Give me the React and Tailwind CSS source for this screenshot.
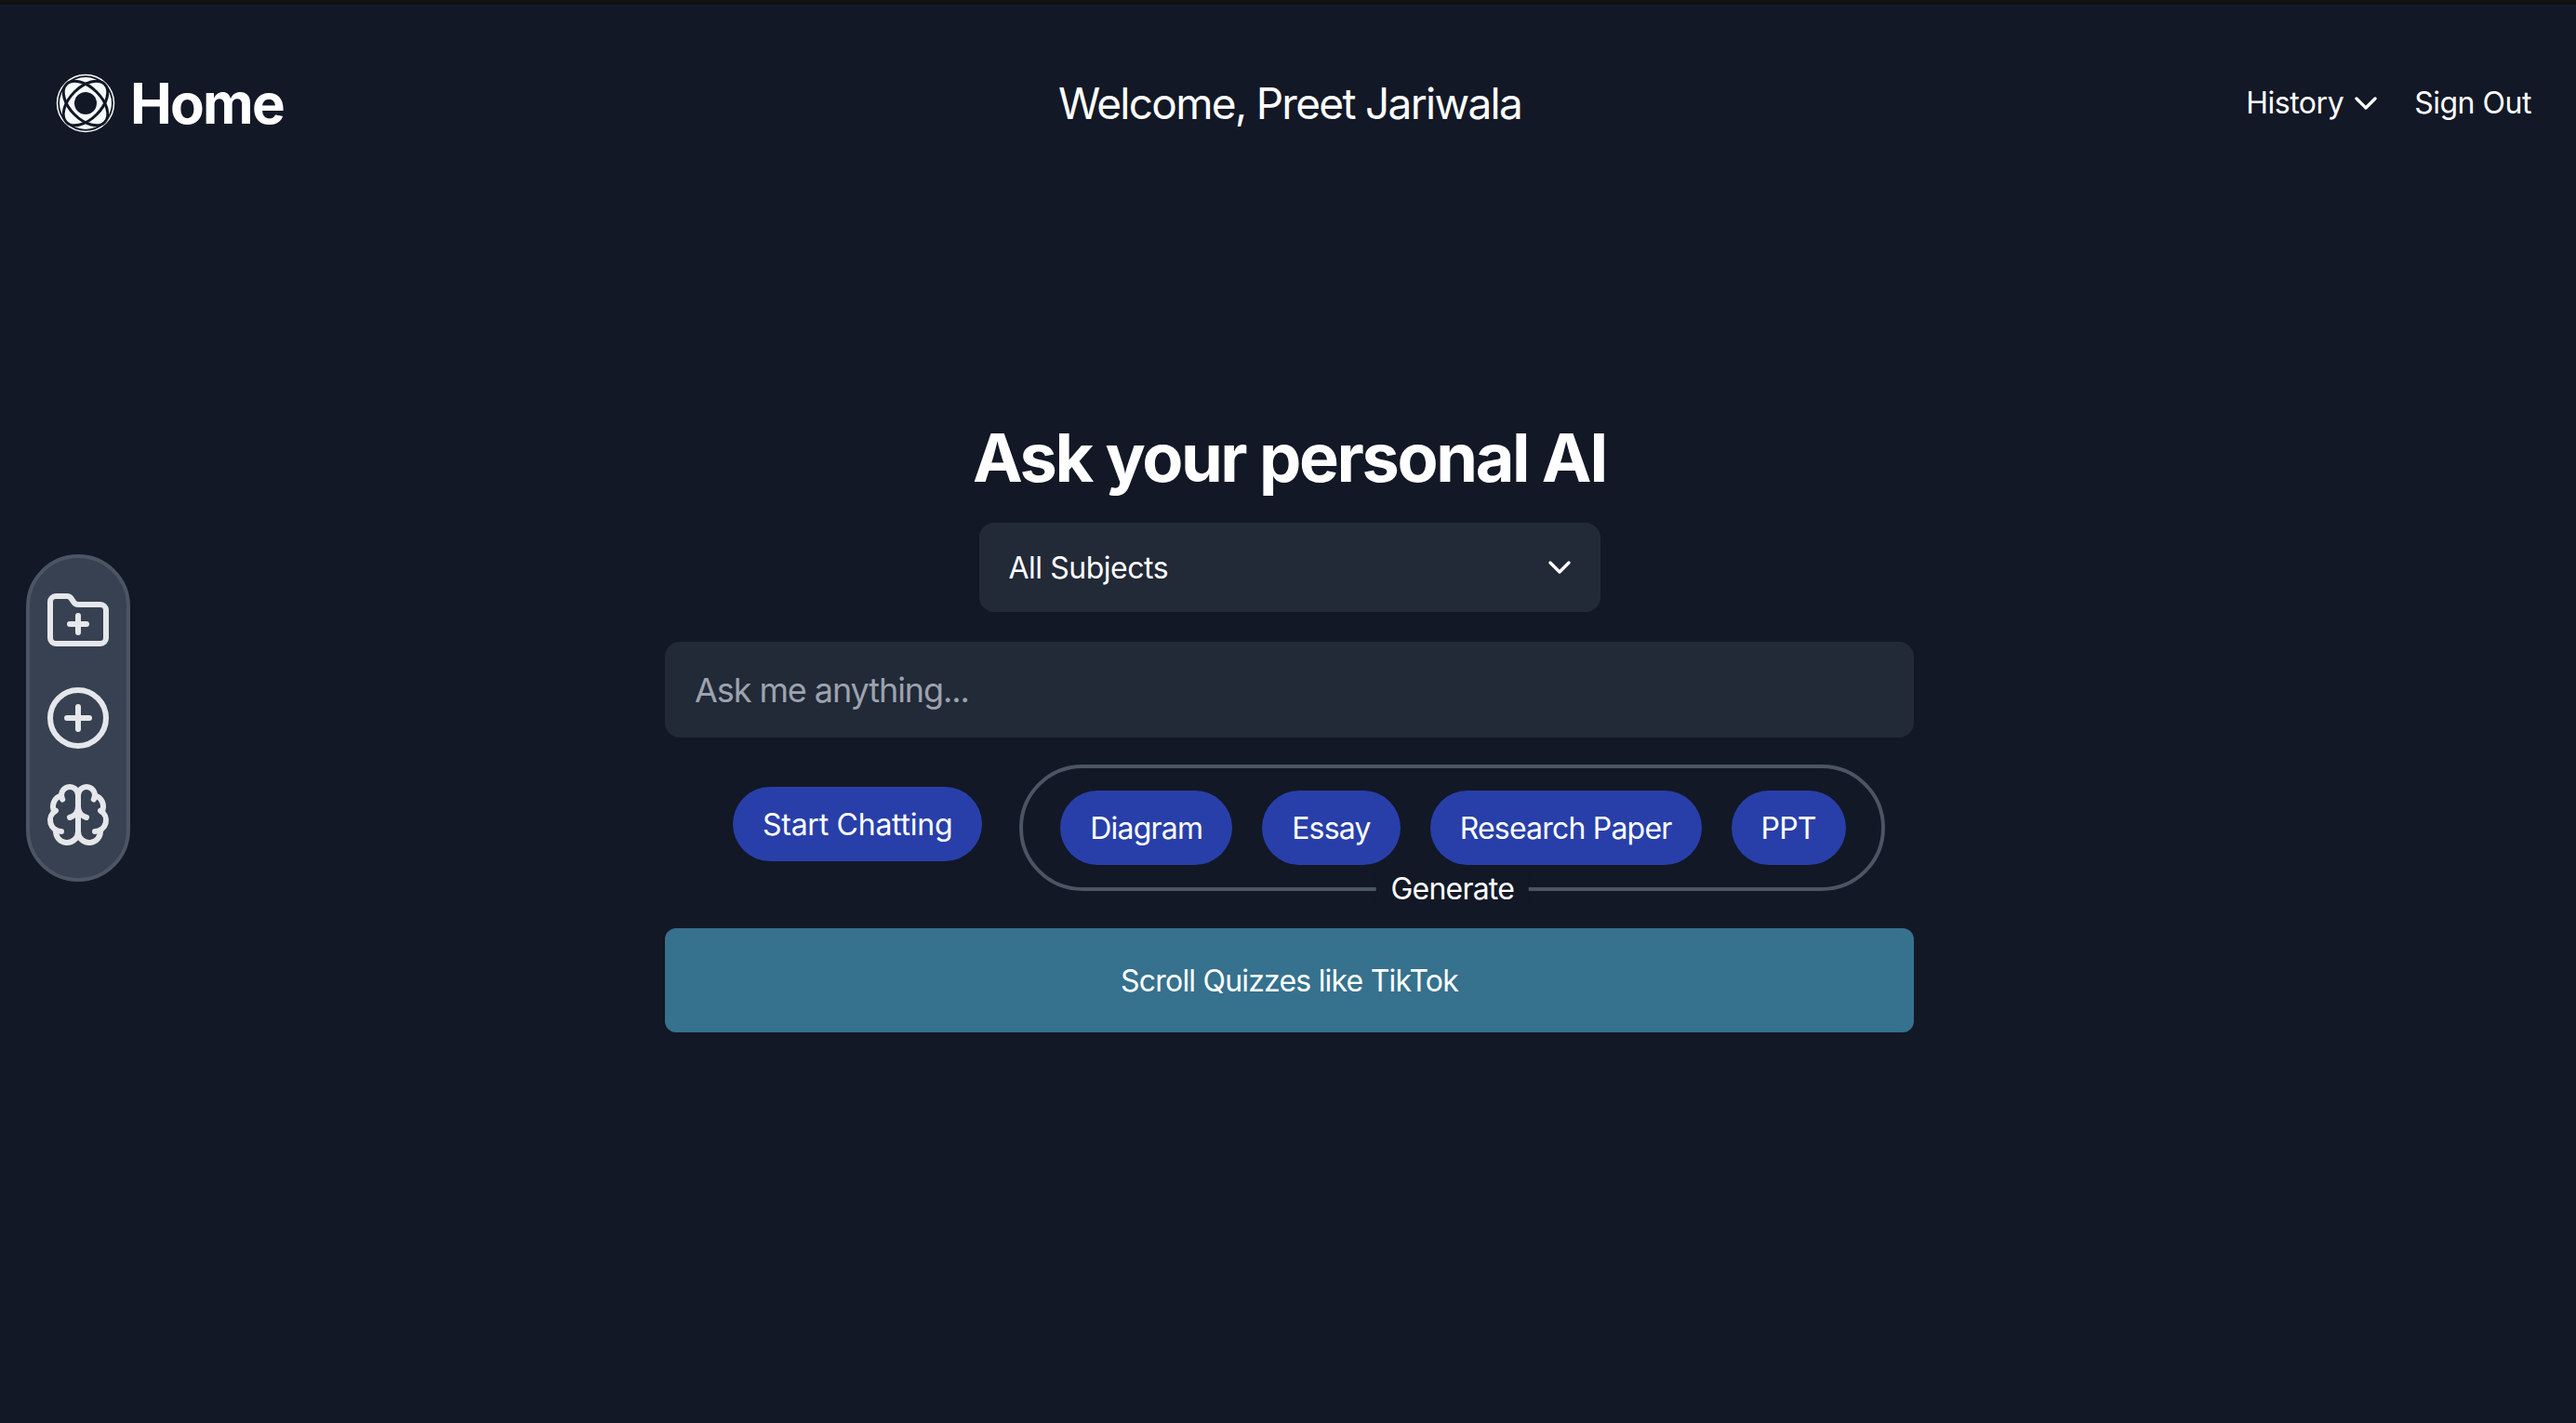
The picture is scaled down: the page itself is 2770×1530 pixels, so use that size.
import React from 'react';
import { FolderPlus, CirclePlus, Brain, ChevronDown } from 'lucide-react';

const Logo = () => (
    <svg width="64" height="64" viewBox="0 0 64 64" fill="none">
        <circle cx="32" cy="32" r="30.5" stroke="#f8fbfc" strokeWidth="1.5" />
        <circle cx="32" cy="32" r="28" fill="#f8fbfc" />
        <ellipse cx="32" cy="32" rx="29" ry="17" transform="rotate(45 32 32)" stroke="#121826" strokeWidth="3" />
        <ellipse cx="32" cy="32" rx="29" ry="17" transform="rotate(-45 32 32)" stroke="#121826" strokeWidth="3" />
        <rect x="19" y="19" width="26" height="26" rx="11" transform="rotate(45 32 32)" fill="#121826" />
        <circle cx="32" cy="32" r="15" fill="#f8fbfc" />
        <circle cx="32" cy="32" r="12" fill="#121826" />
    </svg>
);

const Pill = ({ children, className = 'tracking-[-0.025em]' }) => (
    <button type="button" className={`h-20 whitespace-nowrap rounded-full bg-[#283fa9] px-8 pt-0.5 text-[32px] font-normal text-white ${className}`}>
        {children}
    </button>
);

export default function App() {
    return (
        <div className="relative min-h-[1530px] bg-[#121826] font-['Inter',sans-serif] text-white">
            <div className="h-[5px] bg-[#111111]" />

            {/* Header */}
            <header className="grid h-[212px] grid-cols-3 items-center pl-[60px] pr-[48px]">
                <div className="flex items-center gap-4">
                    <Logo />
                    <span className="text-[60px] font-bold tracking-[-0.03em]">Home</span>
                </div>
                <div className="whitespace-nowrap pr-2 text-center text-[46px] font-normal tracking-[-0.037em]">Welcome, Preet Jariwala</div>
                <div className="flex items-center justify-end gap-8 text-[32px] font-normal tracking-[-0.015em]">
                    <span className="flex items-center gap-1">History <ChevronDown size={40} strokeWidth={2} /></span>
                    <span>Sign Out</span>
                </div>
            </header>

            {/* Sidebar */}
            <div className="fixed left-7 top-[596px] flex h-[352px] w-[112px] flex-col items-center gap-8 rounded-full border-4 border-[#4b5563] bg-[#374151] pt-[32px] text-[#e5e7eb]">
                <FolderPlus size={72} strokeWidth={2} />
                <CirclePlus size={72} strokeWidth={2} />
                <Brain size={72} strokeWidth={2} />
            </div>

            {/* Main */}
            <main className="ml-[715px] flex w-[1343px] flex-col items-center pt-[230px]">
                <h1 className="text-[72px] font-bold leading-[90px] tracking-[-0.033em]">Ask your personal AI</h1>
                <div className="mt-[25px] flex h-24 w-[668px] items-center justify-between rounded-2xl bg-[#222937] pl-8 pr-6 text-[32px] font-normal tracking-[-0.015em]">
                    <span className="pt-0.5">All Subjects</span>
                    <ChevronDown size={40} strokeWidth={2} />
                </div>
                <div className="mt-8 flex h-[103px] w-full items-center rounded-2xl bg-[#222937] px-8 text-[36px] tracking-[-0.03em] text-[#9ca3af]">
                    Ask me anything...
                </div>
                <div className="mt-[29px] flex w-full items-start gap-10 pl-[73px]">
                    <Pill className="mt-6 tracking-[-0.008em]">Start Chatting</Pill>
                    <div className="relative flex h-[136px] w-[931px] items-center gap-8 rounded-full border-4 border-[#4b5563] px-10">
                        <Pill>Diagram</Pill>
                        <Pill>Essay</Pill>
                        <Pill>Research Paper</Pill>
                        <Pill>PPT</Pill>
                        <span className="absolute -bottom-[26px] left-1/2 -translate-x-1/2 bg-[#121826] px-4 text-[32px] font-normal tracking-[-0.025em]">Generate</span>
                    </div>
                </div>
                <button type="button" className="mt-10 h-[112px] w-full rounded-xl bg-[#36718e] pt-0.5 text-[32px] font-normal tracking-[-0.025em]">
                    Scroll Quizzes like TikTok
                </button>
            </main>
        </div>
    );
}
